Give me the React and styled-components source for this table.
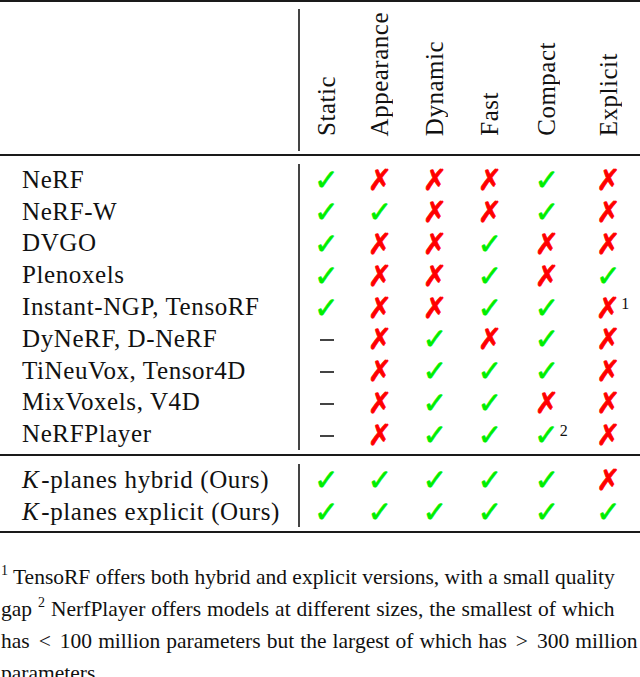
import React from 'react';
import styled, { createGlobalStyle } from 'styled-components';

const SERIF = '"Liberation Serif", Tinos, "Times New Roman", serif';

const GlobalStyle = createGlobalStyle`
  html, body {
    margin: 0;
    padding: 0;
    background: #fff;
  }
  body {
    font-family: ${SERIF};
    color: #111;
  }
`;

const columns = ['Static', 'Appearance', 'Dynamic', 'Fast', 'Compact', 'Explicit'];

// y = check, n = cross, d = dash; a trailing digit is a footnote mark
const rows = [
  { name: 'NeRF', marks: ['y', 'n', 'n', 'n', 'y', 'n'] },
  { name: 'NeRF-W', marks: ['y', 'y', 'n', 'n', 'y', 'n'] },
  { name: 'DVGO', marks: ['y', 'n', 'n', 'y', 'n', 'n'] },
  { name: 'Plenoxels', marks: ['y', 'n', 'n', 'y', 'n', 'y'] },
  { name: 'Instant-NGP, TensoRF', marks: ['y', 'n', 'n', 'y', 'y', 'n1'] },
  { name: 'DyNeRF, D-NeRF', marks: ['d', 'n', 'y', 'n', 'y', 'n'] },
  { name: 'TiNeuVox, Tensor4D', marks: ['d', 'n', 'y', 'y', 'y', 'n'] },
  { name: 'MixVoxels, V4D', marks: ['d', 'n', 'y', 'y', 'n', 'n'] },
  { name: 'NeRFPlayer', marks: ['d', 'n', 'y', 'y', 'y2', 'n'] },
];

const ours = [
  { name: 'hybrid', marks: ['y', 'y', 'y', 'y', 'y', 'n'] },
  { name: 'explicit', marks: ['y', 'y', 'y', 'y', 'y', 'y'] },
];

const GRID = '300px 53px 54px 56px 54px 60px 1fr';

const Page = styled.div`
  width: 640px;
  overflow: hidden;
  font-family: ${SERIF};
`;

const Table = styled.div`
  display: flex;
  flex-direction: column;
`;

const Rule = styled.div`
  height: ${(p) => p.$size}px;
  background: #1a1a1a;
`;

const Section = styled.div`
  padding: ${(p) => p.$top}px 0 ${(p) => p.$bottom}px;
`;

const Row = styled.div`
  display: grid;
  grid-template-columns: ${GRID};
  height: ${(p) => p.$h}px;
  align-items: center;
`;

const Label = styled.div`
  height: 100%;
  display: flex;
  align-items: center;
  padding-left: 22px;
  border-right: 2px solid #444;
  font-size: 25px;
  letter-spacing: 0.6px;
  white-space: nowrap;
`;

const HeadCell = styled.div`
  height: 100%;
  display: flex;
  justify-content: center;
  align-items: flex-end;
  padding-bottom: 15px;
  box-sizing: border-box;
`;

const HeadText = styled.span`
  writing-mode: vertical-rl;
  transform: rotate(180deg);
  font-size: 25px;
  letter-spacing: 0.5px;
  line-height: 24px;
  white-space: nowrap;
`;

const Cell = styled.div`
  display: flex;
  justify-content: center;
  align-items: center;
  height: 100%;
`;

const Glyph = styled.span`
  font-family: "DejaVu Sans", sans-serif;
  font-size: 29px;
  line-height: 1;
  color: ${(p) => (p.$ok ? '#00ee00' : '#ff0000')};
  -webkit-text-stroke: 0.7px ${(p) => (p.$ok ? '#00ee00' : '#ff0000')};
  margin-top: 2px;
`;

const Dash = styled.span`
  display: block;
  width: 14px;
  height: 2px;
  background: #444;
  margin-top: 3px;
`;

const Sup = styled.span`
  font-size: 16px;
  line-height: 1;
  color: #111;
  margin-left: 1px;
  align-self: flex-start;
  margin-top: 5px;
  width: 0;
`;

const MathK = styled.i`
  font-style: italic;
  margin-right: 2px;
`;

const Notes = styled.div`
  margin-top: 28px;
  font-size: 21.5px;
  line-height: 32px;
  padding-left: 1px;
`;

const NoteLine = styled.div`
  white-space: nowrap;
  word-spacing: ${(p) => p.$spread || 0}px;
`;

const NoteMark = styled.sup`
  font-size: 14px;
  line-height: 1;
  vertical-align: 9px;
`;

const Rel = styled.span`
  margin: 0 9px;
`;

const Mark = ({ code }) => {
  const kind = code[0];
  const note = code.slice(1);
  return (
    <Cell>
      {kind === 'd' ? (
        <Dash />
      ) : (
        <Glyph $ok={kind === 'y'}>{kind === 'y' ? '✓' : '✗'}</Glyph>
      )}
      {note && <Sup>{note}</Sup>}
    </Cell>
  );
};

const App = () => {
  return (
    <Page>
      <GlobalStyle />
      <Table>
        <Rule $size={2} />
        <Section $top={7} $bottom={3}>
          <Row $h={142}>
            <Label />
            {columns.map((c) => (
              <HeadCell key={c}>
                <HeadText>{c}</HeadText>
              </HeadCell>
            ))}
          </Row>
        </Section>
        <Rule $size={2} />
        <Section $top={8} $bottom={4}>
          {rows.map((r) => (
            <Row key={r.name} $h={31.8}>
              <Label>{r.name}</Label>
              {r.marks.map((m, i) => (
                <Mark key={i} code={m} />
              ))}
            </Row>
          ))}
        </Section>
        <Rule $size={2} />
        <Section $top={8} $bottom={4}>
          {ours.map((r) => (
            <Row key={r.name} $h={31.6}>
              <Label>
                <MathK>K</MathK>-planes {r.name} (Ours)
              </Label>
              {r.marks.map((m, i) => (
                <Mark key={i} code={m} />
              ))}
            </Row>
          ))}
        </Section>
        <Rule $size={2} />
      </Table>
      <Notes>
        <NoteLine>
          <NoteMark>1</NoteMark> TensoRF offers both hybrid and explicit versions, with a small quality
        </NoteLine>
        <NoteLine $spread={0.6}>
          gap <NoteMark>2</NoteMark> NerfPlayer offers models at different sizes, the smallest of which
        </NoteLine>
        <NoteLine $spread={0.7}>
          has<Rel>&lt;</Rel>100 million parameters but the largest of which has<Rel>&gt;</Rel>300 million
        </NoteLine>
        <NoteLine>parameters.</NoteLine>
      </Notes>
    </Page>
  );
};

export default App;
